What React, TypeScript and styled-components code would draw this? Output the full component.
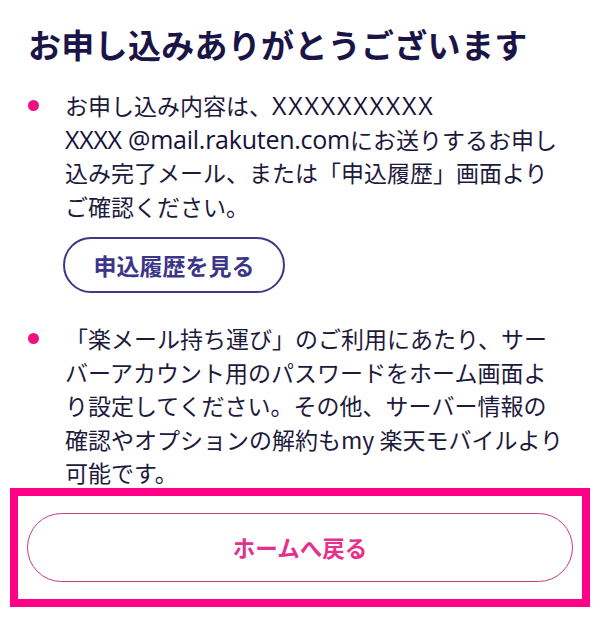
import { FC } from "react";
import styled, { createGlobalStyle } from "styled-components";

const GlobalStyle = createGlobalStyle`
  body {
    margin: 0;
    background: #ffffff;
    font-family: "Noto Sans CJK JP", "Noto Sans", sans-serif;
    color: #1d1a3c;
  }
`;

const Page = styled.div`
  padding: 22px 28px 0;
`;

const Title = styled.h1`
  margin: 0;
  font-size: 33px;
  line-height: 45px;
  font-weight: 700;
  color: #1a1546;
  letter-spacing: 0.3px;
`;

const List = styled.ul`
  list-style: none;
  margin: 22px 0 0;
  padding: 0;
`;

const Item = styled.li<{ $gap?: number }>`
  display: grid;
  grid-template-columns: 37px 1fr;
  padding-right: 4px;
  margin-top: ${({ $gap }) => $gap ?? 0}px;
`;

const Dot = styled.span`
  width: 11px;
  height: 11px;
  margin-top: 11px;
  border-radius: 50%;
  background: #f0107f;
`;

const Body = styled.div`
  font-size: 23px;
  line-height: 33.5px;
  color: #1d1a3c;
`;

const Text = styled.p`
  margin: 0;
`;

// Mail address is set in a wider Latin face than the body copy
const Mail = styled.span<{ $spacing?: number }>`
  font-family: "Open Sans", "Noto Sans", sans-serif;
  font-size: 25px;
  font-weight: 500;
  line-height: 33.5px;
  letter-spacing: ${({ $spacing }) => $spacing ?? -0.25}px;
  color: #15123a;
`;

const OutlineButton = styled.button`
  display: flex;
  align-items: center;
  justify-content: center;
  width: 222px;
  height: 56px;
  margin: 14px 0 0 -2px;
  border: 2px solid #3d3a84;
  border-radius: 28px;
  background: #ffffff;
  font-family: inherit;
  font-size: 23px;
  font-weight: 700;
  color: #3c3689;
  cursor: pointer;
`;

const Highlight = styled.div`
  margin: -2px -18px 0;
  padding: 17px 9px;
  border: 8px solid #ff0087;
`;

const HomeButton = styled.button`
  display: flex;
  align-items: center;
  justify-content: center;
  width: 100%;
  height: 69px;
  border: 1.5px solid #c63a82;
  border-radius: 35px;
  background: #ffffff;
  font-family: inherit;
  font-size: 22.5px;
  font-weight: 700;
  color: #e5318b;
  cursor: pointer;
`;

const App: FC = () => {
  return (
    <>
      <GlobalStyle />
      <Page>
        <Title>お申し込みありがとうございます</Title>

        <List>
          <Item>
            <Dot />
            <Body>
              <Text>
                お申し込み内容は、<Mail $spacing={1.8}>XXXXXXXXXX</Mail>
                <br />
                <Mail>XXXX @mail.rakuten.com</Mail>
                にお送りするお申し込み完了メール、または「申込履歴」画面よりご確認ください。
              </Text>
              <OutlineButton>申込履歴を見る</OutlineButton>
            </Body>
          </Item>

          <Item $gap={29}>
            <Dot />
            <Body>
              <Text>
                「楽メール持ち運び」のご利用にあたり、サーバーアカウント用のパスワードをホーム画面より設定してください。その他、サーバー情報の確認やオプションの解約もmy
                楽天モバイルより可能です。
              </Text>
            </Body>
          </Item>
        </List>

        <Highlight>
          <HomeButton>ホームへ戻る</HomeButton>
        </Highlight>
      </Page>
    </>
  );
};

export default App;
